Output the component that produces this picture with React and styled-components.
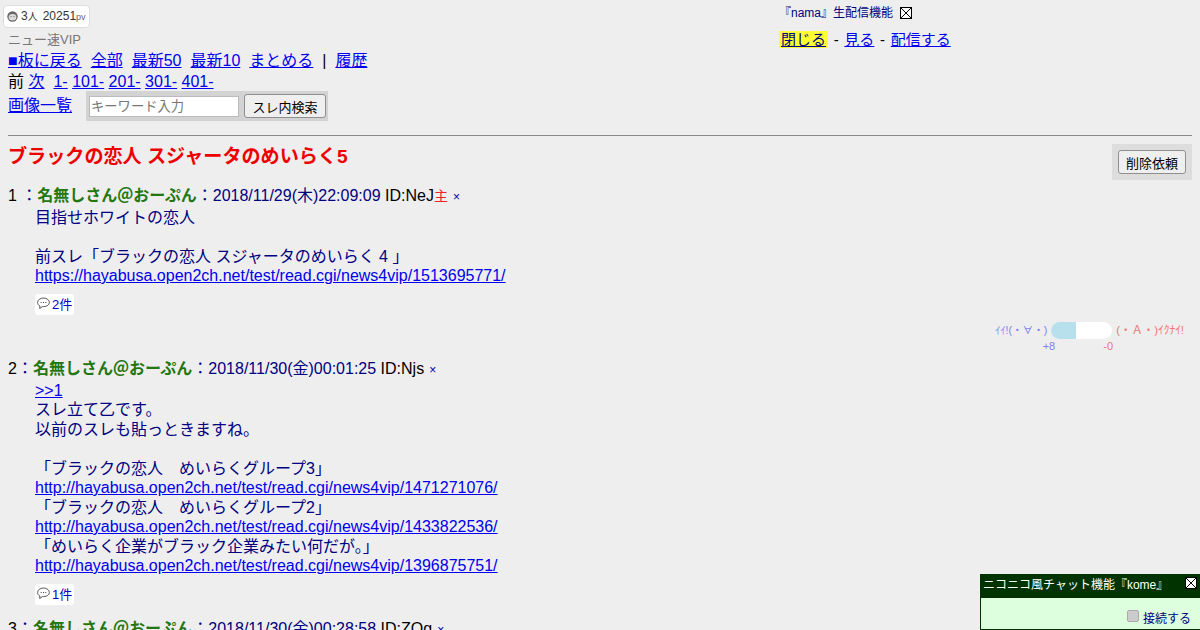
import React from 'react'
import styled, { createGlobalStyle } from 'styled-components'

const Global = createGlobalStyle`
html, body {
  margin: 0;
  padding: 0;
  height: 630px;
  overflow: hidden;
}
body {
  background: #eeeeee;
  color: #000080;
  font-family: "Liberation Sans", "Noto Sans CJK JP", sans-serif;
  font-size: 16px;
  line-height: 19.5px;
}
a { color: #0000ee; }
`

const Page = styled.div`
padding: 5px 8px 0;
`
const CounterBadge = styled.div`
display: inline-flex;
align-items: center;
height: 23px;
box-sizing: border-box;
margin-left: -5px;
padding: 0 3px 0 3px;
background: #fff;
border: 1px solid #ddd;
border-radius: 4px;
font-size: 12px;
color: #333;
`
const Pv = styled.span`
font-size: 9px;
color: #666;
margin-top: 2px;
`
const Ninzu = styled.span`
font-size: 10px;
margin: 0 5px 0 0;
`
const BoardName = styled.div`
font-size: 13px;
line-height: 21px;
color: #777;
margin-top: 1px;
`
const NavRow = styled.div`
color: #000;
height: 21px;
line-height: 21px;
white-space: nowrap;
`
const NavLink = styled.a`
margin-right: ${p => p.$gap || 9}px;
`
const SearchRow = styled.div`
display: flex;
align-items: center;
height: 30px;
margin-top: -1px;
`
const SearchBox = styled.form`
display: flex;
align-items: center;
gap: 5px;
margin-left: 14px;
padding: 3px 2px 3px 3px;
background: #d3d3d3;
`
const SearchInput = styled.input`
width: 150px;
height: 21px;
box-sizing: border-box;
padding: 0 1px;
border: 1px solid #bbb;
background: #fff;
font: 13.3px "Liberation Sans", "Noto Sans CJK JP", sans-serif;
&::placeholder { color: #777; }
`
const GreyButton = styled.button`
height: 24px;
padding: 0 ${p => p.$pad || 7.5}px;
box-sizing: border-box;
background: #efefef;
color: #000;
border: 1px solid #8f8f8f;
border-radius: 3px;
font: 13px "Liberation Sans", "Noto Sans CJK JP", sans-serif;
`
const Rule = styled.hr`
margin: 14px 0 0;
border: 0;
border-top: 1px solid #888;
border-bottom: 1px solid #eee;
`
const TitleRow = styled.div`
display: flex;
justify-content: space-between;
align-items: flex-start;
height: 43px;
margin-top: 6px;
`
const ThreadTitle = styled.h1`
margin: 2px 0 0;
font-size: 19.1px;
line-height: 24px;
font-weight: bold;
color: #ee0000;
`
const DeleteBox = styled.div`
padding: 6px;
margin-top: 1px;
background: #dddddd;
`
const Post = styled.div`
margin-bottom: ${p => p.$after || 0}px;
`
const PostHead = styled.div`
white-space: nowrap;
`
const Num = styled.span`
color: #000;
`
const Name = styled.b`
color: #227711;
`
const IdText = styled.span`
color: #000;
`
const Owner = styled.span`
color: #ee2222;
font-size: 14px;
`
const Cross = styled.a`
font-size: 12px;
color: #0000aa;
text-decoration: none;
margin-left: 5px;
`
const PostBody = styled.div`
margin-left: 27px;
white-space: nowrap;
`
const ReplyBadge = styled.div`
display: inline-flex;
align-items: center;
height: 21px;
margin: 8.5px 0 0 27px;
padding: 0 2px;
background: #fff;
border-radius: 3px;
font-size: 13px;
color: #0000cc;
`
const Bubble = styled.svg`
width: 13px;
height: 13px;
margin: -3px 2px 0 0;
`
const VoteRow = styled.div`
display: flex;
justify-content: flex-end;
align-items: center;
gap: 4px;
height: 17px;
margin: 7px 8px 0 0;
`
const VoteGood = styled.span`
color: #8080ee;
font-size: ${p => p.$size || 11}px;
`
const VoteBad = styled.span`
color: #ee7777;
font-size: ${p => p.$size || 11}px;
`
const VoteBar = styled.div`
width: 61px;
height: 17px;
border-radius: 9px;
overflow: hidden;
background: #fff;
`
const VoteFill = styled.div`
height: 100%;
background: #b8e0ec;
`
const VoteCount = styled.div`
display: flex;
justify-content: flex-end;
gap: 48px;
height: 14px;
margin: 0 79px 0 0;
line-height: 14px;
`
const NamaPanel = styled.div`
position: absolute;
top: 4px;
left: 779px;
color: #000;
`
const NamaHead = styled.div`
display: flex;
align-items: center;
height: 20px;
padding-left: 0;
font-size: 12px;
color: #000080;
`
const CloseBox = styled.span`
display: inline-flex;
margin-left: 7px;
margin-top: -3px;
`
const NamaLinks = styled.div`
margin-top: 6px;
font-size: 15px;
line-height: 20px;
white-space: nowrap;
`
const Highlight = styled.a`
background: #ffff33;
color: #000080;
padding: 0 2px;
`
const Dash = styled.span`
color: #000;
margin: 0 1.5px;
`
const ChatBox = styled.div`
position: fixed;
right: 0;
bottom: 0;
width: 220px;
height: 56px;
box-sizing: border-box;
border: 1px solid #003300;
border-right: 0;
background: #ddffdd;
`
const ChatHead = styled.div`
display: flex;
justify-content: space-between;
height: 23px;
padding: 0 3px 0 2px;
background: #003300;
color: #fff;
font-size: 12px;
line-height: 21px;
`
const ChatClose = styled.span`
display: inline-flex;
margin-top: 2px;
`
const ChatBody = styled.div`
display: flex;
justify-content: flex-end;
align-items: center;
height: 31px;
padding: 10px 9px 0 0;
box-sizing: border-box;
font-size: 12px;
color: #000080;
`
const ChatCheck = styled.input`
appearance: none;
width: 12px;
height: 12px;
margin: 0 4px 6px 0;
background: #cccccc;
border: 1px solid #aaaaaa;
border-radius: 2px;
`
const ChatLabel = styled.span`
margin-top: 3px;
`

const CloseIcon = ({ size = 12 }) => (
  <svg width={size} height={size} viewBox="0 0 12 12">
    <rect x="0.5" y="0.5" width="11" height="11" fill="#fff" stroke="#000" />
    <path d="M1 1L11 11M11 1L1 11" stroke="#000" fill="none" />
  </svg>
)

const Comment = () => (
  <Bubble viewBox="0 0 13 13">
    <path d="M6.500 1C3.200 1 .6 3 .6 5.500c0 1.500.9 2.700 2.300 3.500L2.700 11.500l2.700-1.900h1.100C9.800 9.600 12.400 7.900 12.400 5.500S9.800 1 6.500 1z" fill="#fff" stroke="#444" strokeWidth="0.9" />
    <path d="M3.700 5.500h1M6 5.500h1M8.300 5.500h1" stroke="#444" />
  </Bubble>
)

const FaceIcon = () => (
  <svg width="11" height="11" viewBox="0 0 11 11" style={{ marginRight: 3 }}>
    <circle cx="5.500" cy="5.500" r="5.200" fill="#666" />
    <ellipse cx="5.500" cy="6.200" rx="3.800" ry="3.200" fill="#ddd" />
    <path d="M3.500 5.700h1M6.500 5.700h1" stroke="#555" />
  </svg>
)

const rangeLinks = ['1-', '101-', '201-', '301-', '401-']

const firstBody = (
  <>
    目指せホワイトの恋人<br /><br />
    前スレ「ブラックの恋人 スジャータのめいらく 4 」<br />
    <a href="#">https://hayabusa.open2ch.net/test/read.cgi/news4vip/1513695771/</a>
  </>
)

const secondBody = (
  <>
    <a href="#">&gt;&gt;1</a><br />
    スレ立て乙です。<br />
    以前のスレも貼っときますね。<br /><br />
    「ブラックの恋人　めいらくグループ3」<br />
    <a href="#">http://hayabusa.open2ch.net/test/read.cgi/news4vip/1471271076/</a><br />
    「ブラックの恋人　めいらくグループ2」<br />
    <a href="#">http://hayabusa.open2ch.net/test/read.cgi/news4vip/1433822536/</a><br />
    「めいらく企業がブラック企業みたい何だが。」<br />
    <a href="#">http://hayabusa.open2ch.net/test/read.cgi/news4vip/1396875751/</a>
  </>
)

function App() {
  return (
    <Page>
      <Global />
      <CounterBadge>
        <FaceIcon />3<Ninzu>人</Ninzu>20251<Pv>pv</Pv>
      </CounterBadge>
      <BoardName>ニュー速VIP</BoardName>
      <NavRow>
        <NavLink href="#">■板に戻る</NavLink>
        <NavLink href="#">全部</NavLink>
        <NavLink href="#">最新50</NavLink>
        <NavLink href="#">最新10</NavLink>
        <NavLink href="#">まとめる</NavLink>
        |&nbsp;&nbsp;
        <NavLink href="#">履歴</NavLink>
      </NavRow>
      <NavRow>
        前 <NavLink href="#" $gap={9}>次</NavLink>
        {rangeLinks.map(r => <NavLink key={r} href="#" $gap={4.45}>{r}</NavLink>)}
      </NavRow>
      <SearchRow>
        <a href="#">画像一覧</a>
        <SearchBox>
          <SearchInput placeholder="キーワード入力" />
          <GreyButton type="button">スレ内検索</GreyButton>
        </SearchBox>
      </SearchRow>
      <Rule />
      <TitleRow>
        <ThreadTitle>ブラックの恋人 スジャータのめいらく5</ThreadTitle>
        <DeleteBox><GreyButton type="button" $pad={7}>削除依頼</GreyButton></DeleteBox>
      </TitleRow>

      <Post $after={6}>
        <PostHead>
          <Num>1 </Num>：<Name>名無しさん＠おーぷん</Name>：2018/11/29(木)22:09:09 <IdText>ID:NeJ</IdText><Owner>主</Owner><Cross href="#">×</Cross>
        </PostHead>
        <PostBody>{firstBody}</PostBody>
        <ReplyBadge><Comment />2件</ReplyBadge>
        <VoteRow>
          <VoteGood $size={10.6}>ｲｲ!(・∀・)</VoteGood>
          <VoteBar><VoteFill style={{ width: `${(8 / 20) * 100}%` }} /></VoteBar>
          <VoteBad $size={11.4}>(・Ａ・)ｲｸﾅｲ!</VoteBad>
        </VoteRow>
        <VoteCount>
          <VoteGood>+8</VoteGood>
          <VoteBad>-0</VoteBad>
        </VoteCount>
      </Post>

      <Post $after={14}>
        <PostHead>
          <Num>2</Num>：<Name>名無しさん＠おーぷん</Name>：2018/11/30(金)00:01:25 <IdText>ID:Njs</IdText><Cross href="#">×</Cross>
        </PostHead>
        <PostBody>{secondBody}</PostBody>
        <ReplyBadge><Comment />1件</ReplyBadge>
      </Post>

      <Post>
        <PostHead>
          <Num>3</Num>：<Name>名無しさん＠おーぷん</Name>：2018/11/30(金)00:28:58 <IdText>ID:ZOg</IdText><Cross href="#">×</Cross>
        </PostHead>
      </Post>

      <NamaPanel>
        <NamaHead>『nama』生配信機能<CloseBox><CloseIcon /></CloseBox></NamaHead>
        <NamaLinks>
          <Highlight href="#">閉じる</Highlight>
          <Dash> - </Dash>
          <a href="#">見る</a>
          <Dash> - </Dash>
          <a href="#">配信する</a>
        </NamaLinks>
      </NamaPanel>

      <ChatBox>
        <ChatHead>
          ニコニコ風チャット機能『kome』
          <ChatClose><CloseIcon /></ChatClose>
        </ChatHead>
        <ChatBody>
          <ChatCheck type="checkbox" />
          <ChatLabel>接続する</ChatLabel>
        </ChatBody>
      </ChatBox>
    </Page>
  )
}

export default App
